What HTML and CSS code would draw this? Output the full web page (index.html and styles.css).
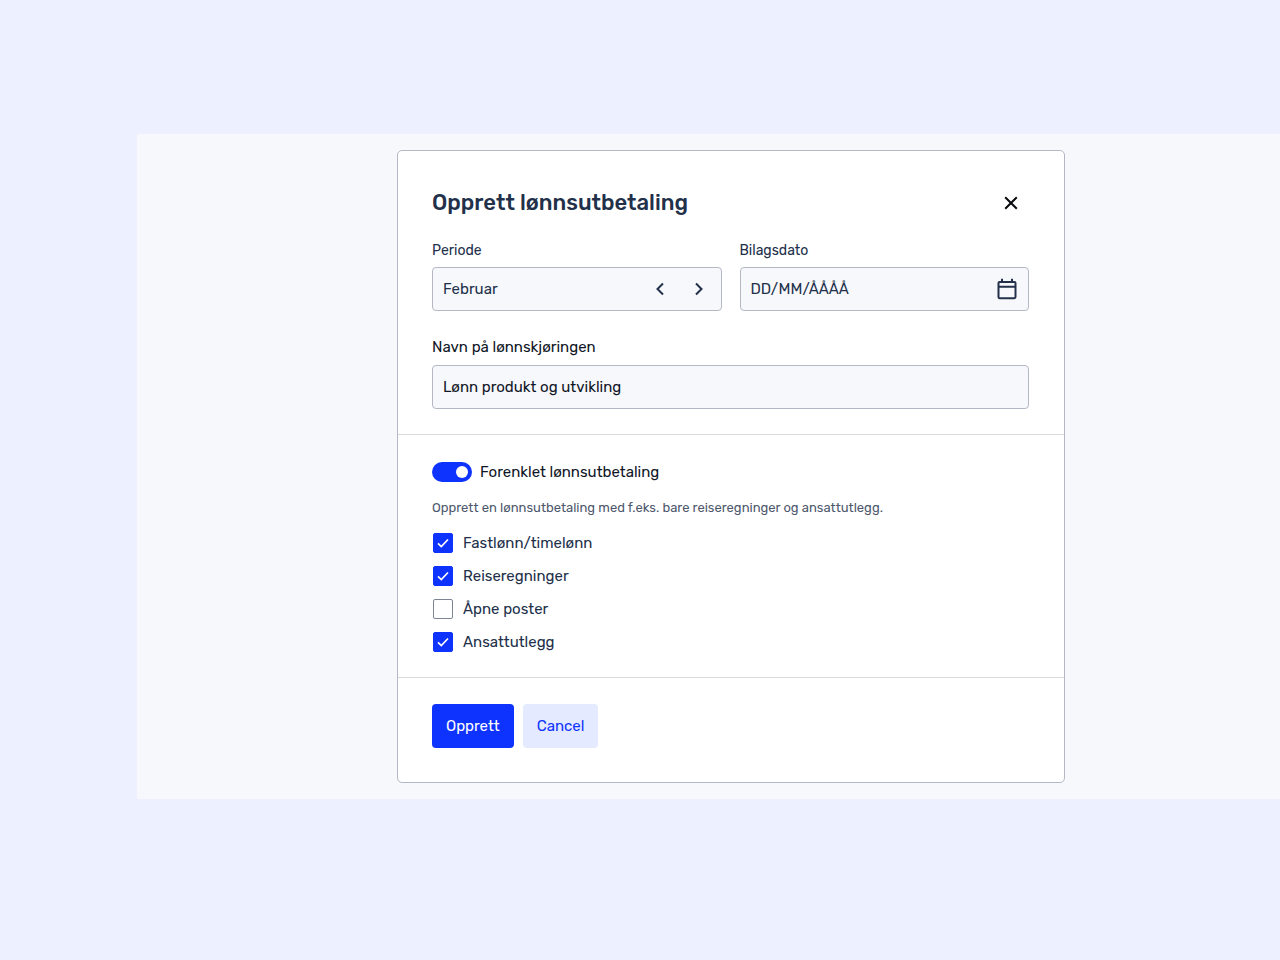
FILE: index.html
```html
<!DOCTYPE html>
<html lang="nb">
<head>
  <meta charset="UTF-8" />
  <meta name="viewport" content="width=device-width, initial-scale=1.0"/>
  <title>Opprett lønnsutbetaling</title>
  <link rel="stylesheet" href="styles.css">
</head>
<body>
  <main class="stage">
    <form class="dialog" role="dialog" aria-labelledby="dialogTitle">
      <!-- Period, date and name -->
      <section class="section details">
        <header class="dialog-header">
          <h1 id="dialogTitle">Opprett lønnsutbetaling</h1>
          <button type="button" class="icon-btn close-btn" aria-label="Lukk">
            <svg width="14" height="14" viewBox="0 0 14 14"><path d="M1.2 1.2 12.8 12.8M12.8 1.2 1.2 12.8"/></svg>
          </button>
        </header>

        <div class="field-row">
          <div class="field">
            <label class="small-label" for="period">Periode</label>
            <div class="control">
              <input type="text" id="period" value="Februar" />
              <button type="button" class="icon-btn step-btn" aria-label="Forrige">
                <svg width="10" height="14" viewBox="0 0 10 14"><path d="M8 1.5 2.5 7 8 12.5"/></svg>
              </button>
              <button type="button" class="icon-btn step-btn" aria-label="Neste">
                <svg width="10" height="14" viewBox="0 0 10 14"><path d="M2 1.5 7.5 7 2 12.5"/></svg>
              </button>
            </div>
          </div>

          <div class="field">
            <label class="small-label" for="date">Bilagsdato</label>
            <div class="control">
              <input type="text" id="date" placeholder="DD/MM/ÅÅÅÅ" />
              <button type="button" class="icon-btn calendar-btn" aria-label="Velg dato">
                <svg width="20" height="22" viewBox="0 0 20 22"><path d="M2.6 4h14.8c.7 0 1.1.4 1.1 1.1v14c0 .7-.4 1.1-1.1 1.1H2.6c-.7 0-1.1-.4-1.1-1.1v-14C1.5 4.4 1.9 4 2.6 4zM1.5 8.7h17M5 .8V4M15 .8V4"/></svg>
              </button>
            </div>
          </div>
        </div>

        <div class="field">
          <label class="name-label" for="name">Navn på lønnskjøringen</label>
          <div class="control name-control">
            <input type="text" id="name" value="Lønn produkt og utvikling" />
          </div>
        </div>
      </section>

      <!-- What to include -->
      <section class="section options">
        <label class="switch-row">
          <input type="checkbox" class="switch" role="switch" checked />
          Forenklet lønnsutbetaling
        </label>
        <p class="hint">Opprett en lønnsutbetaling med f.eks. bare reiseregninger og ansattutlegg.</p>

        <div class="checks">
          <label class="check-row">
            <span class="check">
              <input type="checkbox" checked />
              <svg width="20" height="20" viewBox="0 0 20 20"><path d="M5 10.3 8.3 13.5 15 6.5"/></svg>
            </span>
            Fastlønn/timelønn
          </label>
          <label class="check-row">
            <span class="check">
              <input type="checkbox" checked />
              <svg width="20" height="20" viewBox="0 0 20 20"><path d="M5 10.3 8.3 13.5 15 6.5"/></svg>
            </span>
            Reiseregninger
          </label>
          <label class="check-row">
            <span class="check">
              <input type="checkbox" />
              <svg width="20" height="20" viewBox="0 0 20 20"><path d="M5 10.3 8.3 13.5 15 6.5"/></svg>
            </span>
            Åpne poster
          </label>
          <label class="check-row">
            <span class="check">
              <input type="checkbox" checked />
              <svg width="20" height="20" viewBox="0 0 20 20"><path d="M5 10.3 8.3 13.5 15 6.5"/></svg>
            </span>
            Ansattutlegg
          </label>
        </div>
      </section>

      <footer class="section actions">
        <button type="submit" class="btn primary">Opprett</button>
        <button type="button" class="btn secondary">Cancel</button>
      </footer>
    </form>
  </main>
</body>
</html>
```

FILE: styles.css
```css
* {
  box-sizing: border-box;
}

body {
  margin: 0;
  padding: 134px 0 134px 137px;
  background: #edf0ff;
  color: #22304a;
  font-family: Rubik, Roboto, sans-serif;
  font-size: 15px;
  line-height: 20px;
}

button, input {
  font: inherit;
  color: inherit;
}

button {
  border: none;
  cursor: pointer;
}

svg {
  display: block;
  fill: none;
  stroke: currentColor;
  stroke-width: 2;
}

.stage {
  padding: 16px 215px 16px 260px;
  background: #f7f8fc;
}

.dialog {
  background: #fff;
  border: 1px solid #b4b8c4;
  border-radius: 5px;
}

.section {
  padding: 26px 35px 25px 34px;
}

.section + .section {
  border-top: 1px solid #d9dbdf;
}

.section.details {
  padding-top: 34px;
}

.section.options {
  padding-top: 27px;
}

.section.actions {
  display: flex;
  gap: 9px;
  padding-bottom: 34px;
}

.dialog-header {
  display: flex;
  align-items: center;
  justify-content: space-between;
  margin-bottom: 20px;
}

h1 {
  margin: 0;
  font-size: 22px;
  font-weight: 500;
  line-height: 36px;
}

.icon-btn {
  display: flex;
  align-items: center;
  justify-content: center;
  padding: 0;
  background: none;
}

.close-btn {
  width: 36px;
  height: 36px;
  color: #06080d;
}

.field-row {
  display: grid;
  grid-template-columns: repeat(2, minmax(0, 1fr));
  gap: 18px;
  margin-bottom: 24px;
}

.field {
  display: flex;
  flex-direction: column;
  gap: 6px;
}

.small-label {
  font-size: 14px;
}

.name-label {
  color: #101626;
  line-height: 24px;
}

.control {
  display: flex;
  align-items: center;
  height: 44px;
  padding: 0 10px;
  background: #f7f8fc;
  border: 1px solid #b4b8c4;
  border-radius: 4px;
}

.control input {
  flex: 1;
  min-width: 0;
  padding: 0;
  background: none;
  border: none;
  outline: none;
}

.control input::placeholder {
  color: inherit;
  opacity: 1;
}

.name-control {
  color: #101626;
}

.step-btn {
  width: 24px;
  height: 24px;
}

.step-btn + .step-btn {
  margin-left: 15px;
}

.calendar-btn {
  width: 22px;
  height: 24px;
}

.switch-row {
  display: flex;
  align-items: center;
  gap: 8px;
  color: #101626;
}

.switch {
  display: flex;
  align-items: center;
  justify-content: flex-end;
  width: 40px;
  height: 20px;
  margin: 0;
  padding: 0 4px;
  appearance: none;
  background: #0f33ff;
  border-radius: 10px;
}

.switch::before {
  content: "";
  width: 12px;
  height: 12px;
  background: #fff;
  border-radius: 50%;
}

.switch:not(:checked) {
  justify-content: flex-start;
  background: #8b93a3;
}

.hint {
  margin: 16px 0 15px;
  color: #4d586d;
  font-size: 13px;
}

.checks {
  display: flex;
  flex-direction: column;
  align-items: flex-start;
  gap: 13px;
  padding-left: 1px;
}

.check-row {
  display: flex;
  align-items: center;
  gap: 10px;
}

.check {
  display: grid;
}

.check input,
.check svg {
  grid-area: 1 / 1;
}

.check input {
  width: 20px;
  height: 20px;
  margin: 0;
  appearance: none;
  background: #fff;
  border: 1px solid #7d8493;
  border-radius: 2px;
}

.check input:checked {
  background: #0f33ff;
  border-color: #0f33ff;
}

.check svg {
  color: #fff;
  stroke-width: 1.7;
  pointer-events: none;
}

.btn {
  height: 44px;
  padding: 0 14px;
  border-radius: 4px;
}

.primary {
  background: #0f33ff;
  color: #fff;
}

.secondary {
  background: #e4eaff;
  color: #0f33ff;
}
```
